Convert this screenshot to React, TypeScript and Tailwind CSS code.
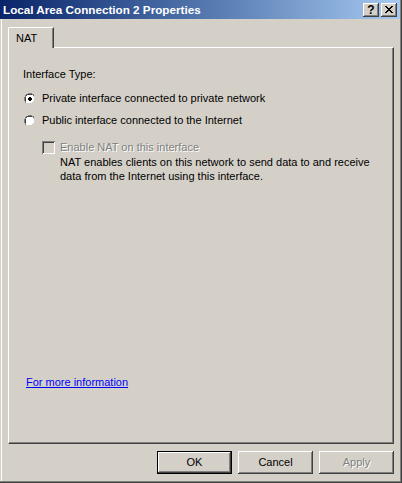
import React from 'react';

const raised =
  'shadow-[inset_-1px_-1px_#404040,inset_1px_1px_#ffffff,inset_-2px_-2px_#808080,inset_2px_2px_#d4d0c8]';

const Radio: React.FC<{ checked?: boolean }> = ({ checked }) => (
  <svg width="12" height="12" viewBox="0 0 12 12" className="shrink-0">
    <path d="M4 0h4v1h2v1h1v2h1v4h-1v2h-1v1h-2v1h-4v-1h-2v-1h-1v-2h-1v-4h1v-2h1v-1h2z" fill="#ffffff" />
    <path d="M4 0h4v1h2v1h-2v-1h-4v1h-2v2h-1v4h1v2h-1v-2h-1v-4h1v-2h1v-1h2z" fill="#808080" />
    <path d="M4 1h4v1h2v1h-1v-1h-1v-0h-4v1h-1v1h-1v4h1v1h-1v-1h-1v-4h1v-2h1v-1h2z" fill="#404040" />
    <path d="M3 2h6v1h1v6h-1v1h-6v-1h-1v-6h1z" fill="#ffffff" />
    <path d="M10 2h1v2h1v4h-1v2h-1v1h-2v1h-4v-1h-2v-1h6v-1h1v-1h1v-4h-1z" fill="#d4d0c8" />
    {checked && <path d="M5 4h2v1h1v2h-1v1h-2v-1h-1v-2h1z" fill="#000000" />}
  </svg>
);

const TitleButton: React.FC<{ children: React.ReactNode }> = ({ children }) => (
  <div className={`w-[16px] h-[14px] bg-[#d4d0c8] flex items-center justify-center ${raised}`}>{children}</div>
);

const DialogButton: React.FC<{ label: string; isDefault?: boolean; disabled?: boolean }> = ({
  label,
  isDefault,
  disabled,
}) => (
  <div
    className={`w-[75px] h-[23px] bg-[#d4d0c8] flex items-center justify-center ${
      isDefault
        ? 'shadow-[inset_0_0_0_1px_#000000,inset_-2px_-2px_#404040,inset_2px_2px_#ffffff,inset_-3px_-3px_#808080]'
        : raised
    }`}
  >
    <span className={disabled ? 'text-[#808080] [text-shadow:1px_1px_#ffffff]' : 'text-black'}>{label}</span>
  </div>
);

const App: React.FC = () => {
  return (
    <div
      className="w-[402px] h-[483px] bg-[#d4d0c8] flex flex-col text-[11px] leading-[13px] text-black shadow-[inset_-1px_-1px_#404040,inset_-2px_-2px_#808080,inset_1px_0_#d4d0c8,inset_2px_0_#ffffff]"
      style={{ fontFamily: '"Liberation Sans", Arial, sans-serif' }}
    >
      {/* title bar */}
      <div className="h-[19px] mr-[2px] flex items-center justify-between bg-gradient-to-r from-[#0a246a] to-[#a6caf0] pl-[3px] pr-[3px]">
        <span className="font-bold text-white text-[11.7px]">Local Area Connection 2 Properties</span>
        <div className="flex gap-[2px]">
          <TitleButton>
            <span className="font-bold text-[12px] leading-none text-black">?</span>
          </TitleButton>
          <TitleButton>
            <svg width="8" height="7" viewBox="0 0 8 7">
              <path d="M0 0h2v1h1v1h2v-1h1v-1h2v1h-1v1h-1v1h-1v1h1v1h1v1h1v1h-2v-1h-1v-1h-2v1h-1v1h-2v-1h1v-1h1v-1h1v-1h-1v-1h-1v-1h-1z" fill="#000000" />
            </svg>
          </TitleButton>
        </div>
      </div>

      {/* tabs */}
      <div className="mt-[8px] ml-[8px] mr-[8px] flex flex-col">
        <div className="flex">
          <div className="w-[46px] h-[21px] border-t border-l border-white rounded-tl-[2px] shadow-[inset_-1px_0_#808080] border-r border-r-[#404040] flex items-center pl-[7px] -mb-px relative z-10 bg-[#d4d0c8]">
            NAT
          </div>
        </div>
        <div className="h-[397px] border-t border-l border-white border-r border-b border-r-[#404040] border-b-[#404040] shadow-[inset_-1px_-1px_#808080] flex flex-col pl-[14px] pt-[20px]">
          <div>Interface Type:</div>
          <div className="mt-[11px] flex items-center gap-[6px] pl-[1px]">
            <Radio checked />
            <span>Private interface connected to private network</span>
          </div>
          <div className="mt-[9px] flex items-center gap-[6px] pl-[1px]">
            <Radio />
            <span>Public interface connected to the Internet</span>
          </div>
          <div className="mt-[14px] flex items-center gap-[5px] pl-[19px]">
            <div className="w-[13px] h-[13px] bg-[#d4d0c8] shadow-[inset_1px_1px_#808080,inset_-1px_-1px_#ffffff,inset_2px_2px_#404040,inset_-2px_-2px_#d4d0c8]" />
            <span className="text-[#808080] [text-shadow:1px_1px_#ffffff]">Enable NAT on this interface</span>
          </div>
          <div className="pl-[37px] leading-[14px] mt-[1px]">
            NAT enables clients on this network to send data to and receive
            <br />
            data from the Internet using this interface.
          </div>
          <div className="mt-[193px] pl-[3px]">
            <span className="text-[#0000ff] underline">For more information</span>
          </div>
        </div>
      </div>

      {/* buttons */}
      <div className="mt-[7px] flex justify-end gap-[6px] pr-[8px]">
        <DialogButton label="OK" isDefault />
        <DialogButton label="Cancel" />
        <DialogButton label="Apply" disabled />
      </div>
    </div>
  );
};

export default App;
